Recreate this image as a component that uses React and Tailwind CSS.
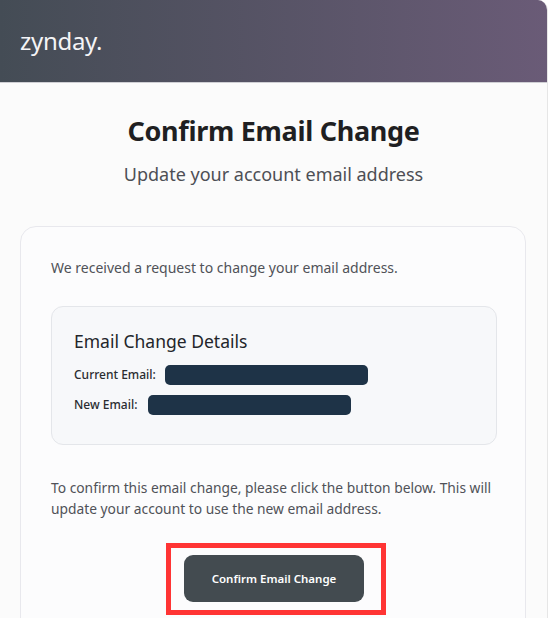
const Redacted = ({ width }) => (
    <span className={`inline-block h-[20px] rounded-[5px] bg-[#1e3347] ${width}`}></span>
);

const App = () => {
    return (
        <div className="w-[550px] h-[636px] bg-white" style={{ fontFamily: '"Noto Sans", "Open Sans", sans-serif' }}>
            <div className="w-[548px] h-[618px] overflow-hidden bg-[#fbfbfb] border-r border-[#e6e6e6] rounded-tr-[10px]">
                {/* header */}
                <div className="h-[83px] flex items-center px-5 bg-linear-to-r from-[#444c55] to-[#6a5b77] border-b border-[#cfcfd4]">
                    <span className="text-[24px] text-[#f4f4f6] tracking-[-0.3px]">zynday.</span>
                </div>

                <div className="text-center pt-[29px]">
                    <h1 className="text-[27px] font-bold text-[#1f1f22] leading-[38px] tracking-[-0.3px]">Confirm Email Change</h1>
                    <p className="mt-[11px] text-[18px] text-[#4d4f55] leading-[26px]">Update your account email address</p>
                </div>

                <div className="mx-5 mt-[39px] w-[506px] rounded-[16px] border border-[#e8e8ed] bg-[#fcfcfd] pl-[30px] pr-[28px] pt-[31px] pb-10">
                    <p className="text-[14px] text-[#505258] leading-[20px]">We received a request to change your email address.</p>

                    <div className="mt-[28px] rounded-[12px] border border-[#e4e6ea] bg-[#f7f8fa] px-[22px] pt-[21px] pb-[29px]">
                        <h2 className="text-[17.5px] text-[#23252a] leading-[26px]">Email Change Details</h2>
                        <div className="mt-[11px] flex items-center gap-[9px] text-[12px] font-medium text-[#2a2c30] leading-[20px]">
                            <span>Current Email:</span>
                            <Redacted width="w-[203px]" />
                        </div>
                        <div className="mt-[10px] flex items-center gap-[11px] text-[12px] font-medium text-[#2a2c30] leading-[20px]">
                            <span>New Email:</span>
                            <Redacted width="w-[203px]" />
                        </div>
                    </div>

                    <p className="mt-[32px] text-[13.8px] text-[#505258] leading-[21px]">
                        To confirm this email change, please click the button below. This will update your account to use the new email address.
                    </p>

                    <div className="mt-[24px] flex justify-center">
                        <div className="border-[5px] border-[#ff3434] pl-[13px] pr-[17px] pt-[7px] pb-[8px] ml-[4px]">
                            <button className="w-[180px] h-[47px] rounded-[9px] bg-[#434b50] text-white text-[11.5px] font-semibold">
                                Confirm Email Change
                            </button>
                        </div>
                    </div>
                </div>
            </div>
        </div>
    );
};

export default App;
